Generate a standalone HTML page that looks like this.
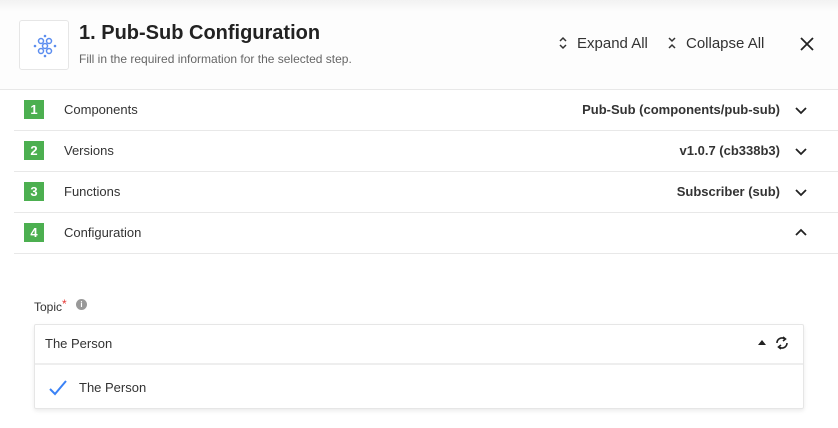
<!DOCTYPE html>
<html><head><meta charset="utf-8"><style>
*{margin:0;padding:0;box-sizing:border-box}
body{width:838px;height:428px;background:#fff;font-family:"Liberation Sans",sans-serif;position:relative;overflow:hidden;color:#333}
.hdr{position:absolute;left:0;top:0;width:838px;height:90px;background:linear-gradient(#f2f2f2,#fdfdfd 12px,#fdfdfd);border-bottom:1px solid #e8e8e8}
.logo{position:absolute;left:19px;top:20px;width:50px;height:50px;border:1px solid #e6e6e6;border-radius:3px;background:#fff}
.t{position:absolute;left:79px;top:22px;font-size:20px;font-weight:bold;color:#222}
.s{position:absolute;left:79px;top:52px;font-size:12px;color:#666}
.btn{position:absolute;top:35px;font-size:15px;color:#333}
.row{position:absolute;left:14px;width:824px;height:41px;border-bottom:1px solid #e8e8e8}
.b{position:absolute;left:10px;top:10px;width:20px;height:19px;background:#4caf50;color:#fff;font-size:13px;font-weight:bold;text-align:center;line-height:19px}
.l{position:absolute;left:50px;top:12px;font-size:13px;color:#333}
.v{position:absolute;right:58px;top:12px;font-size:13px;font-weight:bold;color:#333}
.c{position:absolute;right:31px;top:14px}
</style></head><body>
<div class="hdr">
<div class="logo"><svg width="50" height="50" viewBox="0 0 50 50" fill="none" stroke="#5b8def" stroke-width="1.5">
<circle cx="21" cy="20" r="2.5"/><circle cx="29" cy="20" r="2.5"/><circle cx="21" cy="30" r="2.5"/><circle cx="29" cy="30" r="2.5"/><circle cx="25" cy="25" r="2.5"/>
<g fill="#5b8def" stroke="none"><circle cx="25" cy="15" r="1.3"/><circle cx="25" cy="35" r="1.3"/><circle cx="15" cy="25" r="1.3"/><circle cx="35" cy="25" r="1.3"/></g></svg></div>
<div class="t">1. Pub-Sub Configuration</div>
<div class="s">Fill in the required information for the selected step.</div>
<div class="btn" style="left:558px"><svg width="10" height="14" viewBox="0 0 10 14" style="vertical-align:-2px;margin-right:9px" fill="none" stroke="#333" stroke-width="1.5"><path d="M2 5l3-3 3 3M2 9l3 3 3-3"/></svg>Expand All</div>
<div class="btn" style="left:667px"><svg width="10" height="14" viewBox="0 0 10 14" style="vertical-align:-2px;margin-right:9px" fill="none" stroke="#333" stroke-width="1.5"><path d="M2 2l3 3 3-3M2 12l3-3 3 3"/></svg>Collapse All</div>
<svg style="position:absolute;left:799px;top:36px" width="16" height="16" viewBox="0 0 16 16" stroke="#222" stroke-width="1.8"><path d="M2 2l12 12M14 2L2 14"/></svg>
</div>
<div class="row" style="top:90px"><div class="b">1</div><div class="l">Components</div><div class="v">Pub-Sub (components/pub-sub)</div><svg class="c" width="12" height="12" viewBox="0 0 12 12" fill="none" stroke="#222" stroke-width="1.8"><path d="M1 4l5 5 5-5"/></svg></div>
<div class="row" style="top:131px"><div class="b">2</div><div class="l">Versions</div><div class="v">v1.0.7 (cb338b3)</div><svg class="c" width="12" height="12" viewBox="0 0 12 12" fill="none" stroke="#222" stroke-width="1.8"><path d="M1 4l5 5 5-5"/></svg></div>
<div class="row" style="top:172px"><div class="b">3</div><div class="l">Functions</div><div class="v">Subscriber (sub)</div><svg class="c" width="12" height="12" viewBox="0 0 12 12" fill="none" stroke="#222" stroke-width="1.8"><path d="M1 4l5 5 5-5"/></svg></div>
<div class="row" style="top:213px"><div class="b">4</div><div class="l">Configuration</div><svg class="c" width="12" height="12" viewBox="0 0 12 12" fill="none" stroke="#222" stroke-width="1.8"><path d="M1 8l5-5 5 5"/></svg></div>
<div style="position:absolute;left:34px;top:297px;font-size:12px;color:#333">Topic<span style="color:#e53935;vertical-align:3px">*</span></div>
<div style="position:absolute;left:76px;top:299px;width:11px;height:11px;border-radius:50%;background:#999;color:#fff;font-size:8px;text-align:center;line-height:11px;font-weight:bold">i</div>
<div style="position:absolute;left:34px;top:324px;width:770px;height:85px;border:1px solid #e6e6e6;border-radius:2px;box-shadow:0 2px 4px rgba(0,0,0,.08)">
<div style="height:40px;border-bottom:2px solid #eee;font-size:13px;line-height:38px;padding-left:10px">The Person</div>
<div style="position:absolute;left:44px;top:55px;font-size:13px">The Person</div>
<svg style="position:absolute;left:14px;top:55px" width="18" height="16" viewBox="0 0 18 16" fill="none" stroke="#3b82f6" stroke-width="2"><path d="M1 9l5 5L17 1"/></svg>
<svg style="position:absolute;left:723px;top:14px" width="8" height="6" viewBox="0 0 8 6"><path d="M0 6L4 1 8 6z" fill="#222"/></svg>
<svg style="position:absolute;left:738px;top:9px" width="18" height="18" viewBox="0 0 18 18" fill="none" stroke="#222" stroke-width="1.6"><path d="M4 9a5 5 0 0 1 8-4M14 9a5 5 0 0 1-8 4"/><path d="M10 3l2.5 2L10 7M8 11l-2.5 2L8 15" /></svg>
</div>
</body></html>
